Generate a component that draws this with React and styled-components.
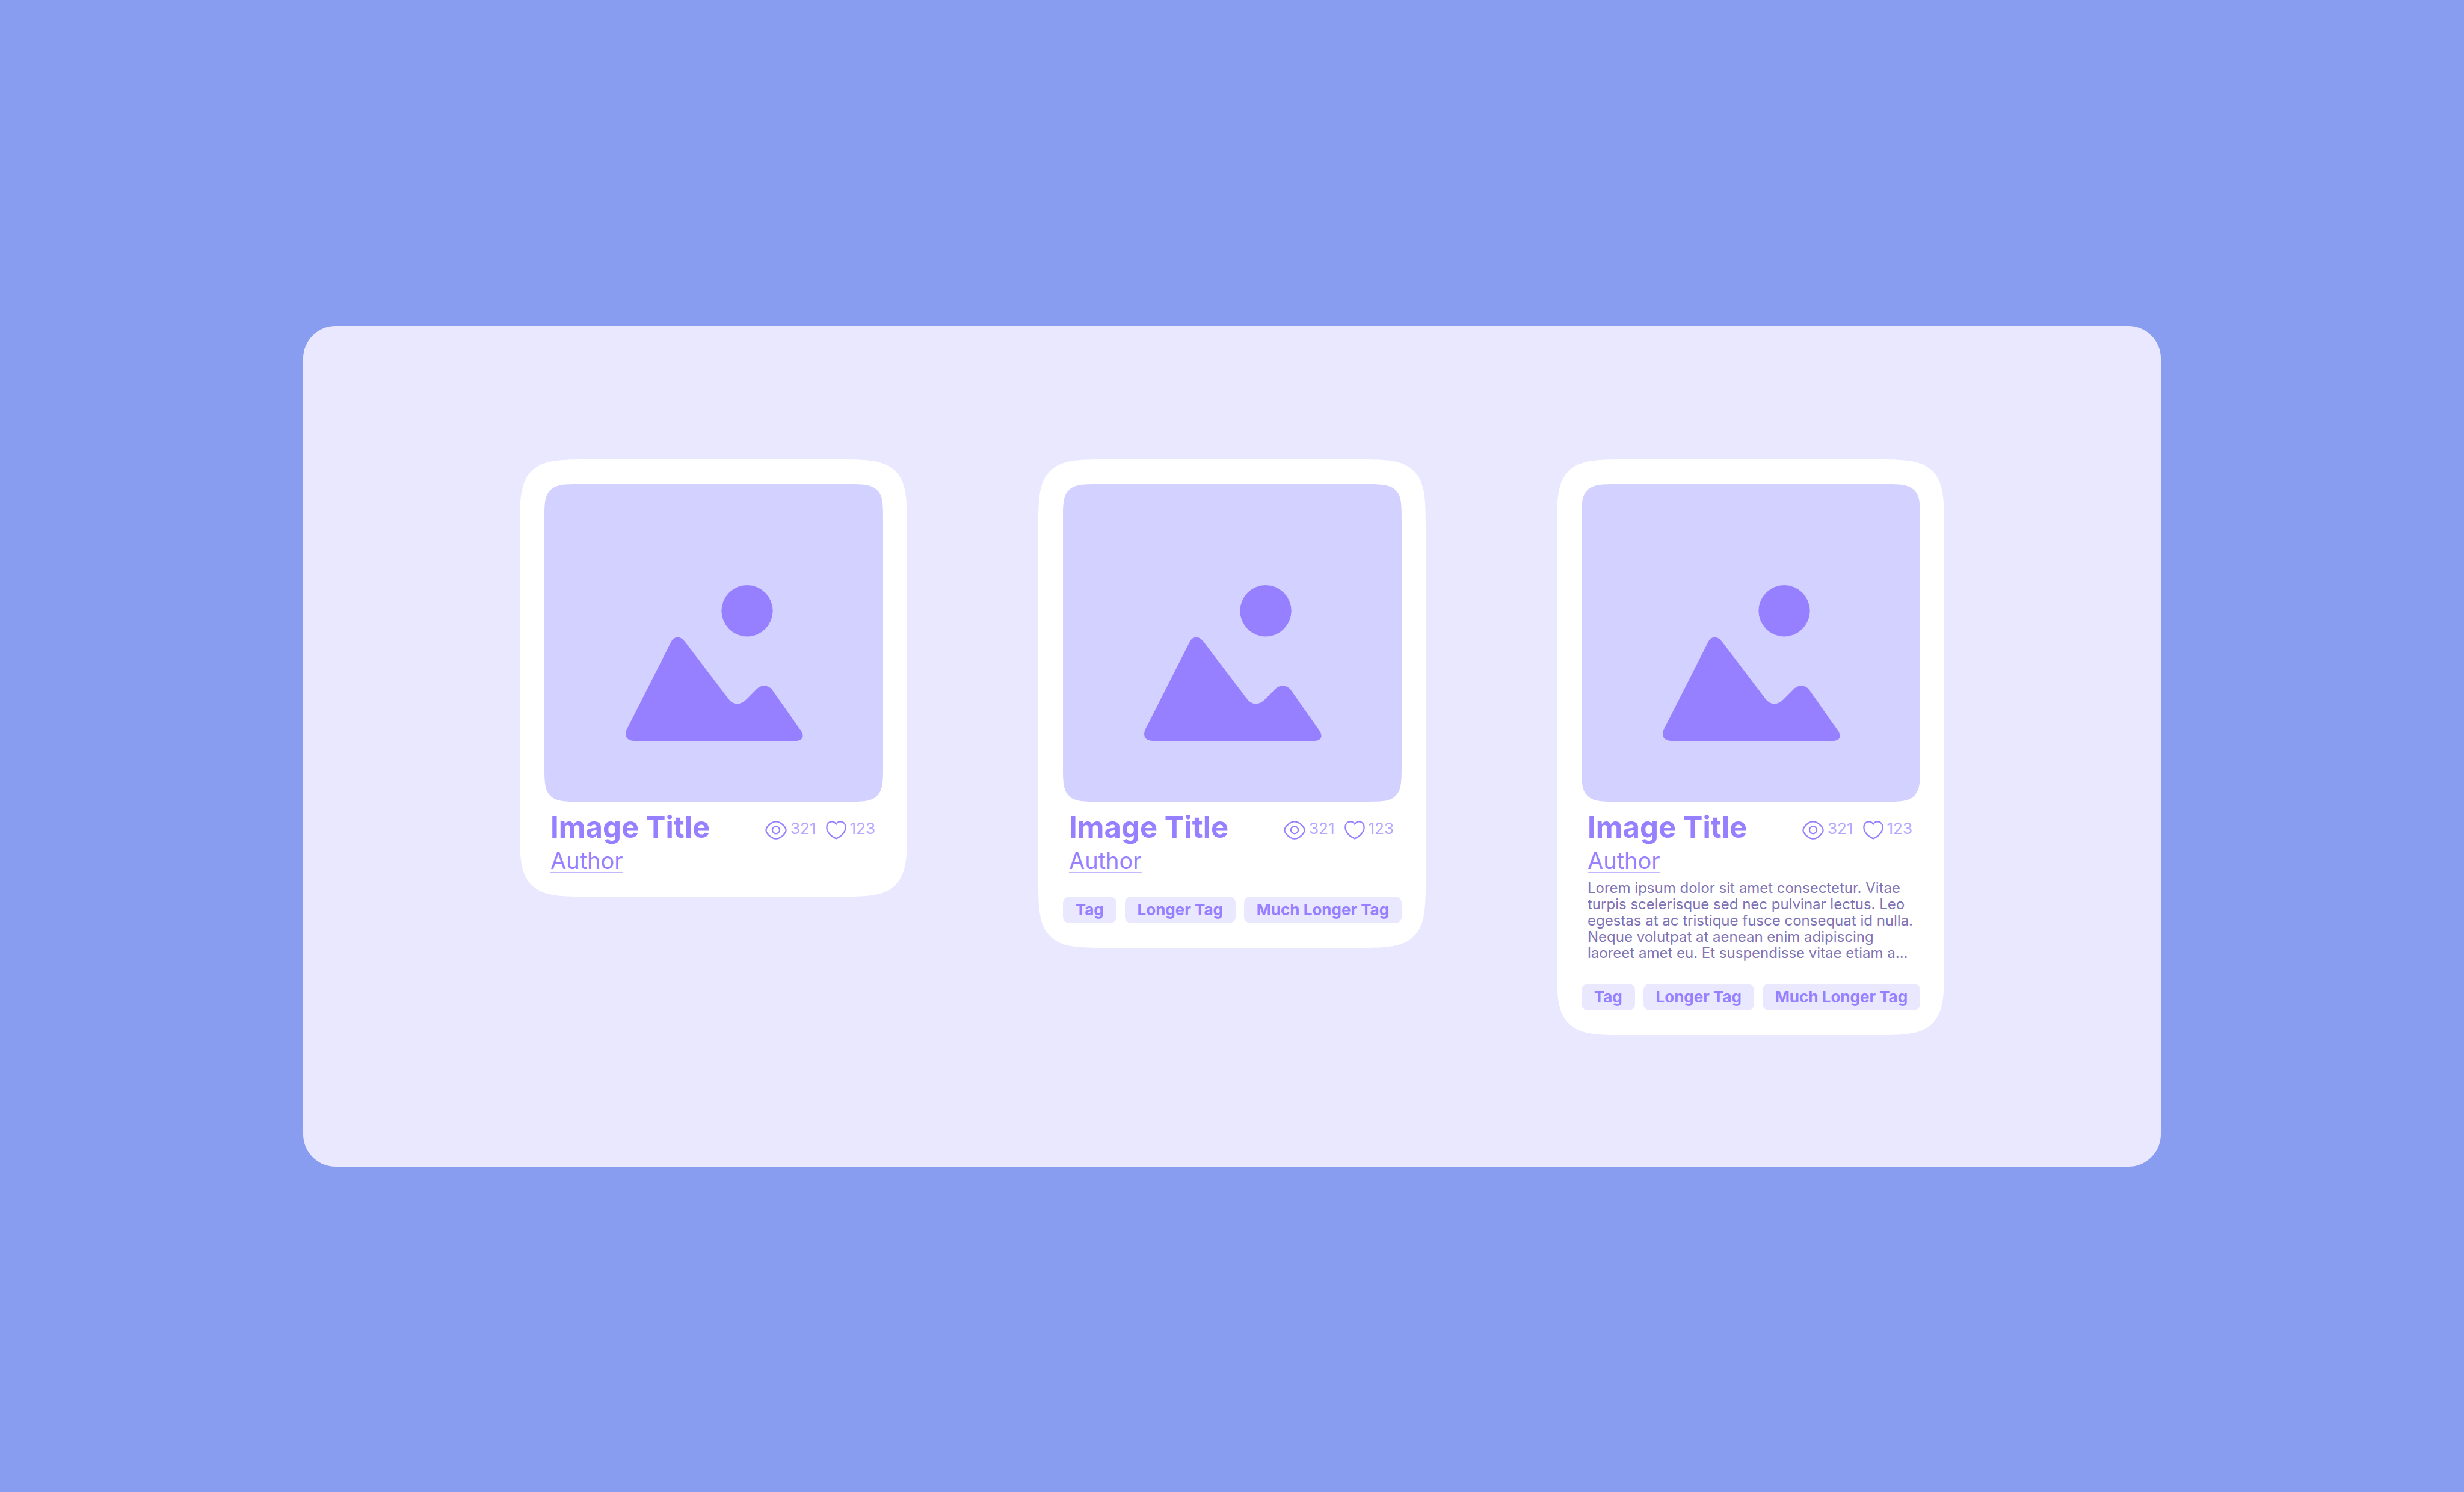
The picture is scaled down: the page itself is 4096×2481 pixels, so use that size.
import React from "react";
import styled, { createGlobalStyle } from "styled-components";

const color = {
  page: "#899df0",
  panel: "#eae8ff",
  card: "#ffffff",
  image: "#d3d1ff",
  accent: "#9780ff",
  accentSoft: "#b6a6ff",
  underline: "#c4b7ff",
  body: "#8073b5",
};

const GlobalStyle = createGlobalStyle`
  *, *::before, *::after { box-sizing: border-box; }
  body {
    margin: 0;
    background: ${color.page};
    font-family: Inter, "Liberation Sans", sans-serif;
  }
  h2, p, ul { margin: 0; padding: 0; }
`;

const Page = styled.main`
  min-height: 100vh;
  padding: 0 504px;
  display: flex;
  align-items: center;
`;

const Panel = styled.section`
  flex: 1;
  display: flex;
  justify-content: center;
  align-items: flex-start;
  gap: 218px;
  padding: 222px 0 219px;
  border-radius: 54px;
  background: ${color.panel};
`;

const Card = styled.article`
  width: 644px;
  padding: 41px 40px 41px 41px;
  border-radius: 123px;
  corner-shape: squircle;
  background: ${color.card};
`;

const Picture = styled.div`
  height: 528px;
  border-radius: 62px;
  corner-shape: squircle;
  overflow: hidden;
  background: ${color.image};

  svg {
    display: block;
    width: 100%;
    height: 100%;
    fill: ${color.accent};
  }
`;

const Info = styled.div`
  padding: 17px 0 0 10px;
`;

const Heading = styled.div`
  display: flex;
  justify-content: space-between;
  align-items: flex-start;
`;

const Title = styled.h2`
  font-size: 49px;
  line-height: 52px;
  font-weight: 700;
  color: ${color.accent};
`;

const Stats = styled.div`
  display: flex;
  gap: 16px;
  margin: 15px 13px 0 0;
`;

const Stat = styled.span`
  display: flex;
  align-items: flex-start;
  gap: 6px;
  font-size: 26px;
  line-height: 26px;
  color: ${color.accentSoft};

  svg {
    height: 31px;
    fill: none;
    stroke: ${color.accent};
    stroke-width: 10;
    stroke-linejoin: round;
  }
`;

const Author = styled.a`
  display: block;
  width: fit-content;
  margin-top: 10px;
  font-size: 38px;
  line-height: 38px;
  color: ${color.accent};
  text-decoration: underline 2px ${color.underline};
  text-decoration-skip-ink: none;
  text-underline-offset: 5px;
`;

const Description = styled.p`
  margin-top: 13px;
  font-size: 24px;
  line-height: 27px;
  color: ${color.body};
`;

const Tags = styled.ul`
  display: flex;
  gap: 14px;
  margin-top: ${(p) => (p.$afterText ? 38 : 41)}px;
  list-style: none;
`;

const Tag = styled.li`
  flex: 1 1 auto;
  padding: 8px 20px;
  border-radius: 10px;
  background: ${color.panel};
  color: ${color.accent};
  font-size: 26px;
  line-height: 28px;
  font-weight: 700;
  text-align: center;
  white-space: nowrap;
`;

const EyeIcon = () => (
  <svg width="36" viewBox="82 76 160 138" aria-label="Views">
    <path d="M88 145C88 131 98 119 108 109C124 93 142 82 162 82C182 82 200 93 216 109C226 119 236 131 236 145C236 159 226 171 216 181C200 197 182 208 162 208C142 208 124 197 108 181C98 171 88 159 88 145Z" />
    <circle cx="162" cy="144" r="27" />
  </svg>
);

const HeartIcon = () => (
  <svg width="34" viewBox="532 76 152 138" aria-label="Likes">
    <path d="M608 101C600 88 591 82 578 82C553 82 538 100 538 125C538 160 572 194 608 207C644 194 678 160 678 125C678 100 663 82 638 82C625 82 616 88 608 101Z" />
  </svg>
);

const Landscape = () => (
  <svg viewBox="0 0 2490 2340" aria-hidden="true">
    <g transform="translate(492 636)">
      <circle cx="999" cy="298" r="189" />
      <path d="M113 1170L440 525C452 502 468 493 487 493C510 493 526 506 544 530L855 938C876 968 900 983 927 983C953 983 975 970 995 950L1062 882C1080 863 1100 850 1124 850C1150 850 1171 862 1188 886L1392 1177C1402 1191 1409 1205 1409 1220C1409 1242 1392 1257 1350 1257L170 1257C128 1257 104 1238 104 1208C104 1195 107 1182 113 1170Z" />
    </g>
  </svg>
);

const tags = ["Tag", "Longer Tag", "Much Longer Tag"];

const cards = [
  { id: "basic" },
  { id: "tagged", tags },
  {
    id: "full",
    tags,
    description:
      "Lorem ipsum dolor sit amet consectetur. Vitae turpis scelerisque sed nec pulvinar lectus. Leo egestas at ac tristique fusce consequat id nulla. Neque volutpat at aenean enim adipiscing laoreet amet eu. Et suspendisse vitae etiam a...",
  },
];

function ImageCard({ description, tags }) {
  return (
    <Card>
      <Picture>
        <Landscape />
      </Picture>
      <Info>
        <Heading>
          <Title>Image Title</Title>
          <Stats>
            <Stat>
              <EyeIcon />
              321
            </Stat>
            <Stat>
              <HeartIcon />
              123
            </Stat>
          </Stats>
        </Heading>
        <Author href="#author">Author</Author>
        {description && <Description>{description}</Description>}
      </Info>
      {tags && (
        <Tags $afterText={Boolean(description)}>
          {tags.map((t) => (
            <Tag key={t}>{t}</Tag>
          ))}
        </Tags>
      )}
    </Card>
  );
}

export default function App() {
  return (
    <>
      <GlobalStyle />
      <Page>
        <Panel>
          {cards.map((c) => (
            <ImageCard key={c.id} description={c.description} tags={c.tags} />
          ))}
        </Panel>
      </Page>
    </>
  );
}
